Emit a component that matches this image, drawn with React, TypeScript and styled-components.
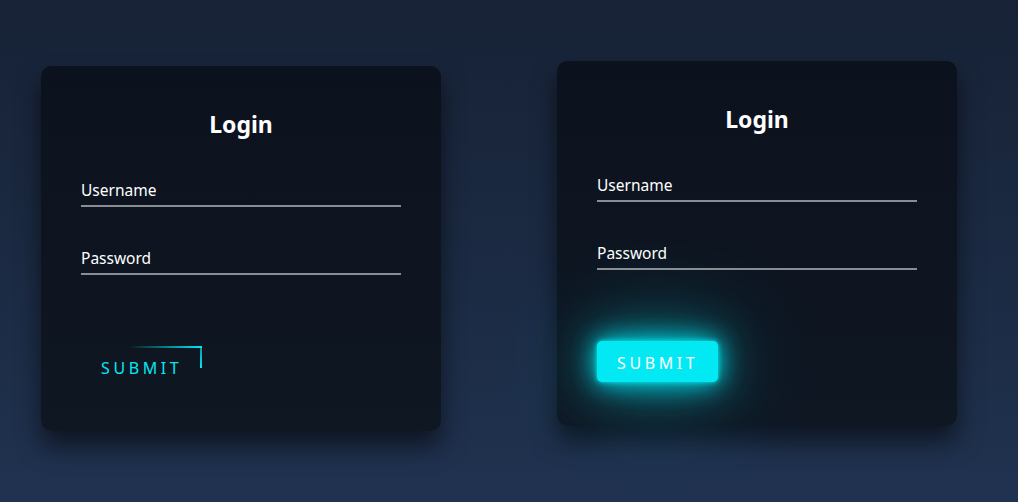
import React from "react";
import styled, { createGlobalStyle, css } from "styled-components";

const Global = createGlobalStyle`
  html, body { margin: 0; padding: 0; }
  body {
    width: 1018px;
    height: 502px;
    overflow: hidden;
    background: linear-gradient(180deg, #172236 0%, #1b2a42 50%, #203250 100%);
    font-family: "Noto Sans", "Open Sans", sans-serif;
  }
`;

const Page = styled.div`
  display: flex;
  align-items: flex-start;
  gap: 116px;
  padding: 66px 0 0 41px;
  height: 502px;
  box-sizing: border-box;
`;

const Card = styled.form<{ $raised?: boolean }>`
  width: 400px;
  height: 365px;
  box-sizing: border-box;
  padding: 40px 40px 0;
  border-radius: 10px;
  background: linear-gradient(180deg, #0c121d 0%, #0f1723 100%);
  box-shadow: 0 15px 25px rgba(0, 0, 0, 0.55);
  display: flex;
  flex-direction: column;
  ${(p) =>
    p.$raised &&
    css`
      transform: translateY(-5px);
    `}
`;

const Title = styled.h2`
  margin: 0 0 36px;
  height: 36px;
  line-height: 36px;
  text-align: center;
  color: #ffffff;
  font-size: 23px;
  font-weight: 700;
`;

const Field = styled.div`
  height: 24px;
  line-height: 24px;
  padding-bottom: 3px;
  border-bottom: 2px solid #8a8d93;
  color: #ffffff;
  font-size: 15.5px;
  margin-bottom: 39px;
`;

const Button = styled.button<{ $active?: boolean }>`
  position: relative;
  overflow: hidden;
  margin-top: 32px;
  align-self: flex-start;
  width: 121px;
  height: 41px;
  padding: 2px 0 0 20px;
  text-align: left;
  border: none;
  border-radius: 0;
  background: transparent;
  color: #03e9f4;
  font-family: "Noto Sans", "Open Sans", sans-serif;
  font-size: 16px;
  letter-spacing: 3.6px;
  line-height: 41px;
  ${(p) =>
    p.$active &&
    css`
      background: #03e9f4;
      color: #ffffff;
      border-radius: 5px;
      overflow: visible;
      box-shadow: 0 0 5px #03e9f4, 0 0 25px #03e9f4, 0 0 50px rgba(3, 233, 244, 0.6),
        0 0 100px rgba(3, 233, 244, 0.45);
    `}
`;

const TopLine = styled.span`
  position: absolute;
  top: 0;
  left: 0;
  width: 121px;
  height: 2px;
  background: linear-gradient(90deg, transparent 0%, transparent 40%, #03e9f4 100%);
`;

const RightLine = styled.span`
  position: absolute;
  top: 0;
  right: 0;
  width: 2px;
  height: 22px;
  background: linear-gradient(180deg, rgba(3, 233, 244, 0.6), #03e9f4);
`;

function LoginCard({ active }: { active?: boolean }) {
  return (
    <Card $raised={active} onSubmit={(e) => e.preventDefault()}>
      <Title>Login</Title>
      <Field>Username</Field>
      <Field>Password</Field>
      <Button type="button" $active={active}>
        {!active && <TopLine />}
        {!active && <RightLine />}
        SUBMIT
      </Button>
    </Card>
  );
}

export default function App() {
  return (
    <>
      <Global />
      <Page>
        <LoginCard />
        <LoginCard active />
      </Page>
    </>
  );
}
